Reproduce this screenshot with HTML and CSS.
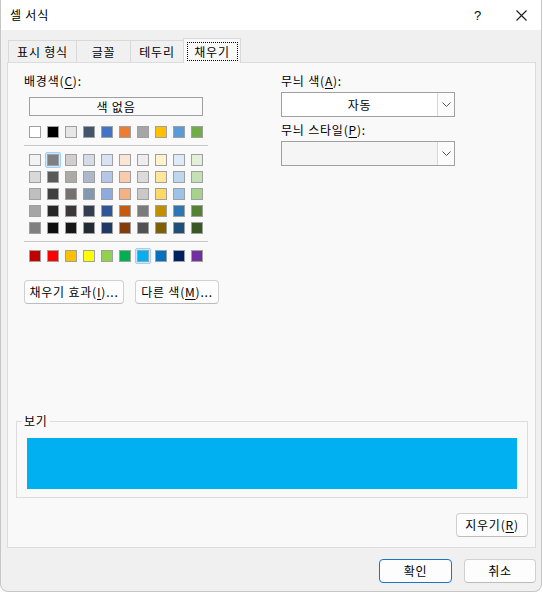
FILE: index.html
```html
<!DOCTYPE html>
<html>
<head>
    <meta charset="utf-8">
    <title>셀 서식</title>
    <link rel="stylesheet" href="styles.css">
</head>
<body>
    <div class="dialog">
        <!-- Title bar -->
        <div class="titlebar">
            <span class="title">셀 서식</span>
            <span class="help">?</span>
            <span class="close">
                <svg width="11" height="11" viewBox="0 0 11 11">
                    <path d="M0.5 0.5 L10.5 10.5 M10.5 0.5 L0.5 10.5" stroke="#1a1a1a" stroke-width="1.1" fill="none"/>
                </svg>
            </span>
        </div>

        <!-- Tabs -->
        <div class="tabs">
            <div class="tab tab-number">표시 형식</div>
            <div class="tab tab-font">글꼴</div>
            <div class="tab tab-border">테두리</div>
            <div class="tab tab-fill active"><span class="focus">채우기</span></div>
        </div>

        <div class="panel">
            <div class="fill-top">
                <!-- Background colour -->
                <div class="bg-col">
                    <div class="label">배경색(<u>C</u>):</div>
                    <div class="no-color">색 없음</div>
                    <div class="swatches" id="themeRow"></div>
                    <div class="sep"></div>
                    <div class="swatches" id="tintGrid"></div>
                    <div class="sep"></div>
                    <div class="swatches" id="standardRow"></div>
                    <div class="btn-row">
                        <button class="btn btn-effects">채우기 효과(<u>I</u>)...</button>
                        <button class="btn btn-more">다른 색(<u>M</u>)...</button>
                    </div>
                </div>

                <!-- Pattern -->
                <div class="pattern-col">
                    <div class="label">무늬 색(<u>A</u>):</div>
                    <div class="combo combo-color">
                        <span class="combo-value">자동</span>
                        <span class="combo-arrow">
                            <svg width="9" height="5" viewBox="0 0 9 5"><path d="M0.5 0.5 L4.5 4.5 L8.5 0.5" stroke="#555" fill="none"/></svg>
                        </span>
                    </div>
                    <div class="label label-style">무늬 스타일(<u>P</u>):</div>
                    <div class="combo combo-style">
                        <span class="combo-value"></span>
                        <span class="combo-arrow">
                            <svg width="9" height="5" viewBox="0 0 9 5"><path d="M0.5 0.5 L4.5 4.5 L8.5 0.5" stroke="#555" fill="none"/></svg>
                        </span>
                    </div>
                </div>
            </div>

            <!-- Preview -->
            <div class="preview-group">
                <div class="group-label">보기</div>
                <div class="preview"></div>
            </div>

            <div class="clear-row">
                <button class="btn btn-clear">지우기(<u>R</u>)</button>
            </div>
        </div>

        <div class="footer">
            <button class="btn btn-ok">확인</button>
            <button class="btn btn-cancel">취소</button>
        </div>
    </div>

    <script>
        // Office theme colours
        var theme = ["#FFFFFF", "#000000", "#E7E6E6", "#44546A", "#4472C4", "#ED7D31", "#A5A5A5", "#FFC000", "#5B9BD5", "#70AD47"];

        // Tints and shades, one row at a time
        var tints = [
            ["#F2F2F2", "#7F7F7F", "#D0CECE", "#D6DCE5", "#D9E2F3", "#FBE5D6", "#EDEDED", "#FFF2CC", "#DEEBF7", "#E2F0D9"],
            ["#D9D9D9", "#595959", "#AEAAAA", "#ADB9CA", "#B4C7E7", "#F8CBAD", "#DBDBDB", "#FFE699", "#BDD7EE", "#C5E0B4"],
            ["#BFBFBF", "#404040", "#757171", "#8497B0", "#8FAADC", "#F4B183", "#C9C9C9", "#FFD966", "#9DC3E6", "#A9D18E"],
            ["#A6A6A6", "#262626", "#3A3838", "#333F50", "#2F5597", "#C55A11", "#7B7B7B", "#BF9000", "#2E75B6", "#548235"],
            ["#808080", "#0D0D0D", "#171616", "#222B35", "#203864", "#843C0C", "#525252", "#7F6000", "#1F4E79", "#385723"]
        ];

        var standard = ["#C00000", "#FF0000", "#FFC000", "#FFFF00", "#92D050", "#00B050", "#00B0F0", "#0070C0", "#002060", "#7030A0"];

        // Build one row of swatches
        function addSwatches(container, colors, selected) {
            colors.forEach(function(color, i) {
                var cls = "cell" + (i === selected ? " sel" : "");
                container.innerHTML += '<span class="' + cls + '"><span class="chip" style="background:' + color + '"></span></span>';
            });
        }

        addSwatches(document.getElementById("themeRow"), theme, -1);
        tints.forEach(function(row, r) {
            addSwatches(document.getElementById("tintGrid"), row, r === 0 ? 1 : -1);
        });
        addSwatches(document.getElementById("standardRow"), standard, 6);
    </script>
</body>
</html>
```

FILE: styles.css
```css
body {
    margin: 0;
    padding: 0;
    background-color: #fff;
    font-family: "Noto Sans CJK KR", "Noto Sans", sans-serif;
    font-size: 12px;
    letter-spacing: 0.8px;
    color: #000;
}

.dialog {
    width: 542px;
    height: 592px;
    box-sizing: border-box;
    background-color: #f0f0f0;
    border: 1px solid #c6c6c6;
    border-top: none;
    border-radius: 0 0 8px 8px;
    overflow: hidden;
}

/* Title bar */
.titlebar {
    height: 30px;
    background-color: #fff;
    display: flex;
    align-items: center;
}

.title {
    margin-left: 9px;
    line-height: 16px;
    flex: 1;
}

.help {
    width: 12px;
    font-family: "Liberation Sans", sans-serif;
    font-size: 13px;
    margin-right: 30px;
}

.close {
    display: flex;
    margin-right: 14px;
}

/* Tabs */
.tabs {
    height: 32px;
    display: flex;
    align-items: flex-end;
    padding-left: 7px;
}

.tab {
    height: 22px;
    box-sizing: border-box;
    border: 1px solid #d9d9d9;
    border-bottom: none;
    margin-right: -1px;
    display: flex;
    align-items: center;
    justify-content: center;
    line-height: 16px;
}

.tab-number { width: 69px; }
.tab-font { width: 55px; }
.tab-border { width: 54px; }

.tab-fill {
    width: 58px;
}

.tab.active {
    height: 25px;
    margin-bottom: -1px;
    background-color: #f9f9f9;
    position: relative;
    z-index: 1;
    align-items: flex-start;
    padding-top: 3px;
}

.focus {
    border: 1px dotted #000;
    width: 51px;
    height: 19px;
    box-sizing: border-box;
    display: flex;
    justify-content: center;
    align-items: center;
}

/* Fill panel */
.panel {
    margin-left: 6px;
    width: 529px;
    box-sizing: border-box;
    background-color: #f9f9f9;
    border: 1px solid #dcdcdc;
    padding: 10px 7px 10px 16px;
}

.fill-top {
    display: flex;
}

.label {
    line-height: 16px;
    height: 16px;
}

u {
    text-decoration-thickness: 1px;
    text-underline-offset: 2px;
}

.bg-col {
    width: 184px;
    display: flex;
    flex-direction: column;
}

.no-color {
    margin: 8px 0 0 5px;
    width: 174px;
    height: 19px;
    box-sizing: border-box;
    border: 1px solid #a0a0a0;
    background-color: #fafafa;
    text-align: center;
    line-height: 17px;
}

.swatches {
    display: grid;
    grid-template-columns: repeat(10, 16px);
    column-gap: 2px;
    row-gap: 1px;
    margin-left: 3px;
}

#themeRow {
    margin-top: 8px;
}

#tintGrid,
#standardRow {
    margin-top: 6px;
}

.cell {
    width: 16px;
    height: 16px;
    box-sizing: border-box;
    display: flex;
    align-items: center;
    justify-content: center;
}

.cell.sel {
    background-color: #cce8ff;
    border: 1px solid #99d1ff;
    border-radius: 2px;
}

.chip {
    width: 12px;
    height: 12px;
    box-sizing: border-box;
    border: 1px solid #a0a0a0;
}

.sep {
    height: 1px;
    background-color: #c8c8c8;
    margin-top: 5px;
    width: 184px;
}

.btn-row {
    display: flex;
    gap: 11px;
    margin-top: 16px;
}

/* Buttons */
.btn {
    flex-shrink: 0;
    height: 24px;
    box-sizing: border-box;
    padding: 0;
    border: 1px solid #d0d0d0;
    border-bottom-color: #bcbcbc;
    border-radius: 4px;
    background-color: #fdfdfd;
    font-family: "Noto Sans CJK KR", "Noto Sans", sans-serif;
    font-size: 12px;
    letter-spacing: 0.8px;
    color: #000;
    line-height: 16px;
}

.btn-effects { width: 100px; }
.btn-more { width: 84px; }
.btn-clear { width: 72px; }
.btn-ok { width: 73px; }
.btn-cancel { width: 72px; }

.btn-ok {
    border: 1px solid #1a73c6;
}

/* Pattern column */
.pattern-col {
    margin-left: 73px;
    width: 174px;
}

.combo {
    margin-top: 3px;
    height: 25px;
    box-sizing: border-box;
    border: 1px solid #a0a0a0;
    display: flex;
}

.combo-color {
    background-color: #fff;
}

.combo-style {
    background-color: #f5f5f5;
}

.label-style {
    margin-top: 5px;
}

.combo-value {
    flex: 1;
    text-align: center;
    line-height: 23px;
}

.combo-arrow {
    width: 17px;
    box-sizing: border-box;
    border-left: 1px solid #d6d6d6;
    background-color: #fcfcfc;
    display: flex;
    align-items: center;
    justify-content: center;
}

/* Preview */
.preview-group {
    margin: 117px 0 0 -8px;
    width: 512px;
    box-sizing: border-box;
    border: 1px solid #dcdcdc;
    padding: 0 10px 8px 10px;
}

.group-label {
    width: fit-content;
    margin: -9px 0 0 -5px;
    padding: 0 2px;
    line-height: 16px;
    background-color: #f9f9f9;
}

.preview {
    margin-top: 9px;
    height: 51px;
    background-color: #00b0f0;
}

.clear-row {
    display: flex;
    justify-content: flex-end;
    margin-top: 15px;
}

/* Footer */
.footer {
    display: flex;
    justify-content: flex-end;
    gap: 12px;
    margin: 11px 5px 0 0;
}
```
